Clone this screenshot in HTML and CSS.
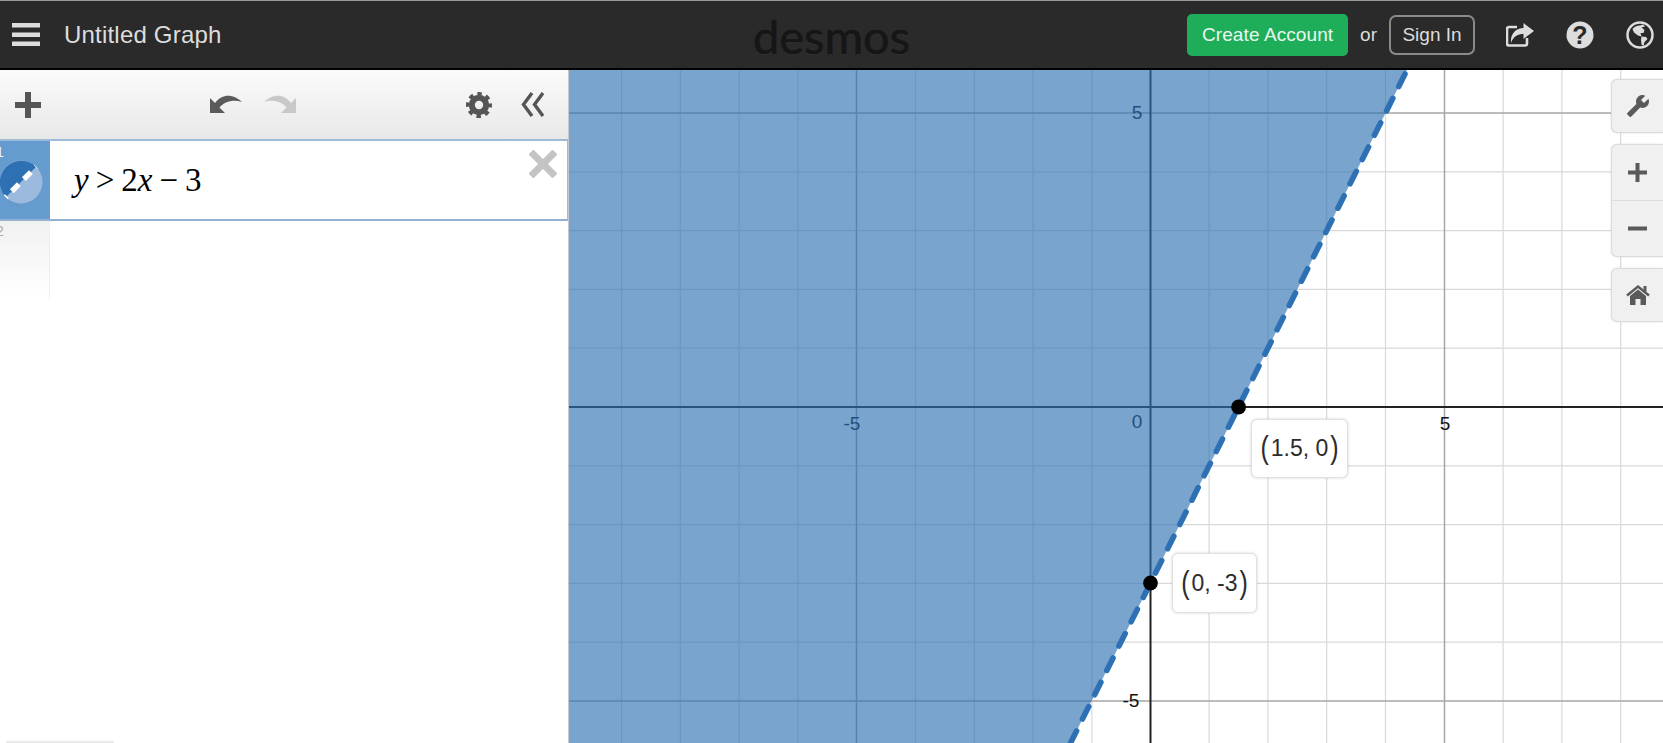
FILE: index.html
```html
<!DOCTYPE html>
<html lang="en">
<head>
<meta charset="utf-8">
<title>Untitled Graph - Desmos</title>
<link rel="stylesheet" href="styles.css">
</head>
<body>
<div class="app">
  <header class="topbar">
    <div class="top-left">
      <svg class="hamburger" viewBox="0 0 28 23"><rect width="28" height="4.5" y="0"/><rect width="28" height="4.5" y="9.5"/><rect width="28" height="4.5" y="18.5"/></svg>
      <span class="title">Untitled Graph</span>
    </div>
    <div class="logo">desmos</div>
    <div class="top-right">
      <a class="btn-create">Create Account</a>
      <span class="or">or</span>
      <a class="btn-signin">Sign In</a>
      <div class="top-icons">
        <svg class="top-icon" viewBox="0 0 28 24"><path class="share-box" d="M21 15v5.500a2 2 0 0 1-2 2H3a2 2 0 0 1-2-2V6a2 2 0 0 1 2-2h8"/><path class="share-arrow" d="M17.500 0 L28 8 L17.500 16 V11 C12 11 7.500 13 5 20 C4 11 10 5 17.500 5 Z"/></svg>
        <svg class="top-icon tall" viewBox="0 0 28 28"><circle class="ic-fill" cx="14" cy="14" r="13.500"/><text class="q-mark" x="14" y="22.500">?</text></svg>
        <svg class="top-icon tall" viewBox="0 0 28 28"><circle class="globe-ring" cx="14" cy="14" r="12.500"/><path class="ic-fill" d="M6.500 8 C8.500 5.500 11.500 4.200 14 4.500 L17 3.500 L19 5.500 L15.500 6.500 L18.500 9 L17.500 12 L14.500 12 L15.500 15.500 L12 14.500 L8 11.500 Z M15.500 15.500 L20 16 L21.500 18 L18.500 21 L17.500 25 L15.500 23.500 L15 19 Z"/></svg>
      </div>
    </div>
  </header>
  <main class="workspace">
    <aside class="panel">
      <div class="toolbar">
        <svg class="tb-plus" viewBox="0 0 26 26"><path d="M10 0h6v10h10v6H16v10h-6V16H0v-6h10z"/></svg>
        <div class="history">
          <svg class="tb-arrow" viewBox="0 0 32 19"><path d="M0 4 L0 19 L15 19 L9.500 13.500 C14 8 23 5 32 8 C25 1 13 -2 5 9 Z"/></svg>
          <svg class="tb-arrow redo" viewBox="0 0 32 19"><path d="M0 4 L0 19 L15 19 L9.500 13.500 C14 8 23 5 32 8 C25 1 13 -2 5 9 Z"/></svg>
        </div>
        <svg class="tb-gear" viewBox="0 0 26 26"><circle class="gear-body" cx="13" cy="13" r="7.200"/><circle class="gear-teeth" cx="13" cy="13" r="11" stroke-dashoffset="2"/></svg>
        <svg class="tb-chev" viewBox="0 0 23 25"><path d="M11 1 L2.500 12.500 L11 24 M22 1 L13.500 12.500 L22 24"/></svg>
      </div>
      <div class="expr">
        <div class="expr-tab">
          <span class="expr-num">1</span>
          <svg class="style-icon" viewBox="0 0 44 44"><circle class="si-light" cx="22" cy="22" r="21.500"/><path class="si-dark" d="M6.800 37.200 A21.500 21.500 0 0 1 37.200 6.800 Z"/><path class="si-dash" d="M6.800 37.200 L37.200 6.800"/></svg>
        </div>
        <div class="expr-body">
          <div class="math"><i>y</i><span class="op">&gt;</span>2<i>x</i><span class="op">−</span>3</div>
          <svg class="close" viewBox="0 0 28 28"><path d="M2 2 L26 26 M26 2 L2 26"/></svg>
        </div>
      </div>
      <div class="expr-empty">
        <div class="empty-tab"><span class="empty-num">2</span></div>
      </div>
      <div class="bottom-mark"></div>
    </aside>
    <section class="graph">
      <svg class="plot" viewBox="569 70 1094 673">
        <g class="minor">
          <path d="M621.500 70V743M680.300 70V743M739.100 70V743M797.900 70V743M915.500 70V743M974.300 70V743M1033.100 70V743M1091.900 70V743M1209.100 70V743M1267.900 70V743M1326.700 70V743M1385.500 70V743M1503.100 70V743M1561.900 70V743M1620.700 70V743"/>
          <path d="M569 171.800H1663M569 230.600H1663M569 289.400H1663M569 348.200H1663M569 465.800H1663M569 524.600H1663M569 583.400H1663M569 642.200H1663"/>
        </g>
        <g class="major">
          <path d="M856.500 70V743M1444.500 70V743M569 113H1663M569 701H1663"/>
        </g>
        <g class="axes">
          <path d="M1150.500 70V743M569 407H1663"/>
        </g>
        <g class="ticks">
          <text x="852" y="430">-5</text>
          <text x="1445" y="430">5</text>
          <text x="1137" y="428">0</text>
          <text x="1137" y="119">5</text>
          <text x="1131" y="707">-5</text>
        </g>
        <polygon class="shade" points="569,70 1407,70 1070.500,743 569,743"/>
        <path class="boundary" d="M1407 70 L1070.500 743"/>
        <circle class="pt" cx="1238.600" cy="407" r="7.400"/>
        <circle class="pt" cx="1150.500" cy="583" r="7.400"/>
      </svg>
      <div class="tip tip-a"><span class="paren">(</span>1.5, 0<span class="paren">)</span></div>
      <div class="tip tip-b"><span class="paren">(</span>0, -3<span class="paren">)</span></div>
      <div class="controls">
        <div class="ctl-card ctl-one">
          <svg class="ctl-ic" viewBox="0 0 24 24"><path transform="translate(24 0) scale(-1 1)" d="M22.700 19l-9.100-9.100c.9-2.300.4-5-1.500-6.900-2-2-5-2.400-7.400-1.300L9 6 6 9 1.600 4.700C.4 7.100.9 10.100 2.900 12.100c1.900 1.900 4.600 2.400 6.900 1.500l9.100 9.100c.4.4 1 .4 1.400 0l2.300-2.300c.5-.4.5-1.100.1-1.400z"/></svg>
        </div>
        <div class="ctl-card ctl-zoom">
          <div class="ctl-half"><svg class="ctl-pm" viewBox="0 0 19 19"><path d="M7.500 0h4v7.500H19v4h-7.500V19h-4v-7.500H0v-4h7.500z"/></svg></div>
          <div class="ctl-half"><svg class="ctl-pm" viewBox="0 0 19 19"><path d="M0 7.500h19v4H0z"/></svg></div>
        </div>
        <div class="ctl-card ctl-one">
          <svg class="ctl-ic" viewBox="0 0 24 20"><path d="M4 11 L12 4.500 L20 11 V20 H14.500 V14 H9.500 V20 H4 Z"/><path class="home-roof" d="M1 10.500 L12 1.500 L23 10.500"/><rect x="17.500" y="1" width="3" height="5.500"/></svg>
        </div>
      </div>
    </section>
  </main>
</div>
</body>
</html>
```
FILE: styles.css
```css
* { box-sizing: border-box; }
html, body { margin: 0; height: 100%; overflow: hidden; background: #fff; }
body { font-family: "Liberation Sans", Arial, sans-serif; }
.app { display: flex; flex-direction: column; width: 100%; height: 100vh; }

/* top bar */
.topbar {
  flex: 0 0 70px;
  display: grid;
  grid-template-columns: 1fr auto 1fr;
  align-items: center;
  background: #2a2a2a;
  border-top: 1px solid #9a9a9a;
  border-bottom: 2px solid #000;
}
.top-left { display: flex; align-items: center; gap: 25px; padding-left: 12px; }
.hamburger { width: 28px; height: 23px; fill: #ddd; }
.title { font-size: 24px; color: #ddd; line-height: 28px; letter-spacing: .2px; margin-left: -1px; }
.logo {
  font-family: Lato, sans-serif;
  font-size: 47px;
  line-height: 50px;
  color: #161616;
  -webkit-text-stroke: .7px #161616;
  text-shadow: 0 1px 0 #353535;
  margin-top: 2px;
}
.top-right { display: flex; align-items: center; justify-content: flex-end; padding-right: 9px; }
.btn-create {
  width: 161px; height: 42px;
  display: flex; align-items: center; justify-content: center;
  background: #1eae5a; color: #eaf7ef;
  font-size: 19px; letter-spacing: .1px; border-radius: 5px;
}
.or { font-size: 19px; color: #ddd; margin: 0 12px 0 12px; }
.btn-signin {
  width: 86px; height: 40px;
  display: flex; align-items: center; justify-content: center;
  border: 2px solid #8a8a8a; border-radius: 7px;
  color: #ddd; font-size: 19px;
}
.top-icons { display: flex; align-items: center; gap: 32px; margin-left: 31px; }
.top-icon { width: 28px; height: 24px; display: block; }
.top-icon.tall { height: 28px; }
.share-box { fill: none; stroke: #ddd; stroke-width: 2.6; }
.share-arrow { fill: #ddd; stroke: #2a2a2a; stroke-width: 1; paint-order: stroke; }
.ic-fill { fill: #ddd; }
.q-mark { font-family: "Liberation Sans", sans-serif; font-weight: 700; font-size: 25px; fill: #2a2a2a; text-anchor: middle; }
.globe-ring { fill: none; stroke: #ddd; stroke-width: 2.5; }

/* workspace */
.workspace { flex: 1; display: flex; min-height: 0; }
.panel { position: relative; flex: 0 0 569px; background: #fff; border-right: 1px solid #c8c8c8; }
.toolbar {
  height: 69px;
  display: flex; align-items: center;
  padding-left: 15px;
  background: linear-gradient(#fbfbfb, #e8e8e8);
}
.tb-plus { width: 26px; height: 26px; fill: #555; }
.history { display: flex; gap: 22px; margin-left: 169px; }
.tb-arrow { width: 32px; height: 19px; fill: #5a5a5a; display: block; margin-top: -3px; }
.tb-arrow.redo { transform: scaleX(-1); fill: #c8c8c8; }
.tb-gear { width: 26px; height: 26px; margin-left: 170px; }
.gear-body { fill: none; stroke: #555; stroke-width: 6; }
.gear-teeth { fill: none; stroke: #555; stroke-width: 4; stroke-dasharray: 4.4 4.24; }
.tb-chev { width: 23px; height: 25px; margin-left: 29px; fill: none; stroke: #555; stroke-width: 3.4; margin-top: -1px; }

.expr {
  height: 82px;
  display: flex;
  border-top: 2px solid #9dbbd9;
  border-bottom: 2px solid #92b0cf;
  border-right: 1px solid #9dbbd9;
}
.expr-tab {
  position: relative;
  flex: 0 0 50px;
  background: #659bcf;
  display: flex; align-items: center;
}
.expr-num { position: absolute; left: -4px; top: 3px; font-size: 14px; color: #eaf1f8; }
.style-icon { width: 44px; height: 44px; margin-left: -1px; margin-top: 3px; display: block; }
.si-light { fill: #9cbadd; }
.si-dark { fill: #2d70b3; }
.si-dash { stroke: #fff; stroke-width: 5.5; stroke-dasharray: 10 7; stroke-dashoffset: 8.5; fill: none; }
.expr-body { flex: 1; position: relative; display: flex; align-items: center; padding-left: 24px; background: #fff; }
.math { font-family: "Liberation Serif", "Times New Roman", serif; font-size: 33px; color: #000; line-height: 40px; white-space: nowrap; }
.op { margin: 0 7px; }
.close { position: absolute; right: 10px; top: 9px; width: 28px; height: 28px; fill: none; stroke: #c4c4c4; stroke-width: 7; }

.expr-empty { height: 78px; }
.empty-tab {
  position: relative;
  width: 50px; height: 100%;
  background: linear-gradient(#f1f1f1, #fff);
  border-right: 1px solid #eee;
}
.empty-num { position: absolute; left: -4px; top: 2px; font-size: 14px; color: #aaa; }
.bottom-mark {
  position: absolute; left: 6px; bottom: 0;
  width: 108px; height: 1px;
  background: #e6e6e6;
  box-shadow: 0 -1px 2px #ddd;
}

/* graph */
.graph { position: relative; flex: 1; min-width: 0; overflow: hidden; background: #fff; }
.plot { display: block; width: 100%; height: 100%; }
.minor path { fill: none; stroke: #d9d9d9; stroke-width: 1.2; }
.major path { fill: none; stroke: #a6a6a6; stroke-width: 1.5; }
.axes path { fill: none; stroke: #222; stroke-width: 2; }
.ticks text { font-family: "Liberation Sans", sans-serif; font-size: 19px; fill: #111; text-anchor: middle; }
.shade { fill: #2d70b3; fill-opacity: .64; }
.boundary { fill: none; stroke: #2d70b3; stroke-width: 5.6; stroke-linecap: round; stroke-dasharray: 14 13.2; stroke-dashoffset: -4.5; }
.pt { fill: #000; }

.tip {
  position: absolute;
  display: flex; align-items: center; justify-content: center;
  background: #fff;
  border: 1px solid #e2e2e2;
  border-radius: 6px;
  box-shadow: 0 0 3px rgba(0,0,0,.18);
  font-size: 23px; color: #2c2c2c;
  white-space: nowrap;
}
.paren { display: inline-block; font-size: 25px; line-height: 30px; margin: -3px 2px 0; transform: scaleY(1.25); }
.tip-a { left: 682px; top: 349px; width: 97px; height: 59px; }
.tip-b { left: 603px; top: 483px; width: 85px; height: 60px; }

.controls { position: absolute; right: 0; top: 9px; width: 52px; display: flex; flex-direction: column; gap: 11px; }
.ctl-card {
  background: #f0f0f0;
  border: 1px solid #dcdcdc;
  border-right: none;
  border-radius: 6px 0 0 6px;
  box-shadow: 0 0 2px rgba(0,0,0,.15);
}
.ctl-one { height: 54px; display: flex; align-items: center; justify-content: center; }
.ctl-zoom { display: flex; flex-direction: column; height: 113px; }
.ctl-half { flex: 1; display: flex; align-items: center; justify-content: center; }
.ctl-half + .ctl-half { border-top: 1px solid #dcdcdc; }
.ctl-ic { width: 24px; height: 24px; fill: #5a5a5a; }
.ctl-pm { width: 19px; height: 19px; fill: #5a5a5a; }
.home-roof { fill: none; stroke: #5a5a5a; stroke-width: 2.5; }
```
